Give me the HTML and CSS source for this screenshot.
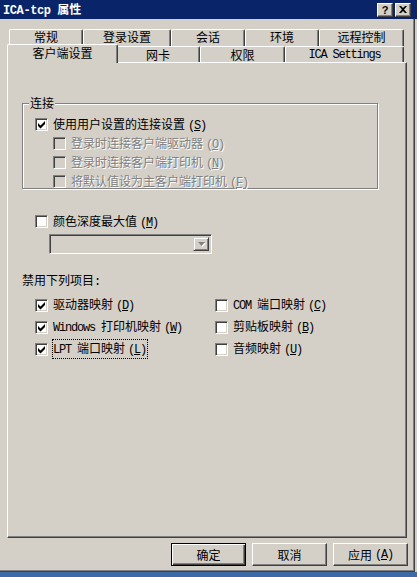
FILE: index.html
```html
<!DOCTYPE html>
<html lang="zh-CN">
<head>
  <meta charset="UTF-8" />
  <title>ICA-tcp 属性</title>
  <link rel="stylesheet" href="styles.css">
</head>
<body>
  <div class="window">
    <div class="titlebar">
      <span class="title"><span class="en">ICA-tcp</span> 属性</span>
      <div class="caption">
        <span class="cap-btn">?</span>
        <span class="cap-btn"><svg width="8" height="7" viewBox="0 0 8 7"><path d="M0 0h2l2 2 2-2h2L5 3.5 8 7H6L4 5 2 7H0l3-3.5z" fill="#000"/></svg></span>
      </div>
    </div>
    <div class="frame">
      <div class="tabs">
        <div class="tabrow back">
          <span class="tab" style="width:74px">常规</span>
          <span class="tab" style="width:88px">登录设置</span>
          <span class="tab" style="width:74px">会话</span>
          <span class="tab" style="width:74px">环境</span>
          <span class="tab" style="width:85px">远程控制</span>
        </div>
        <div class="tabrow front">
          <span class="tab active" style="width:111px">客户端设置</span>
          <span class="tab" style="width:84px">网卡</span>
          <span class="tab" style="width:85px">权限</span>
          <span class="tab" style="width:119px"><span class="en">ICA Settings</span></span>
        </div>
      </div>

      <div class="panel">
        <div class="group">
          <span class="group-label">连接</span>
          <div class="row">
            <span class="cb checked"><svg viewBox="0 0 11 11"><polygon points="2,4 4.5,6.5 9,2 9,5 4.5,9.5 2,7"/></svg></span>
            <span>使用用户设置的连接设置<span class="en key">(<u>S</u>)</span></span>
          </div>
          <div class="row sub disabled">
            <span class="cb"></span>
            <span>登录时连接客户端驱动器<span class="en key">(<u>O</u>)</span></span>
          </div>
          <div class="row sub disabled">
            <span class="cb"></span>
            <span>登录时连接客户端打印机<span class="en key">(<u>N</u>)</span></span>
          </div>
          <div class="row sub disabled">
            <span class="cb"></span>
            <span>将默认值设为主客户端打印机<span class="en key">(<u>F</u>)</span></span>
          </div>
        </div>

        <div class="row depth">
          <span class="cb"></span>
          <span>颜色深度最大值<span class="en key">(<u>M</u>)</span></span>
        </div>
        <div class="combo">
          <span class="combo-btn"><svg width="7" height="4" viewBox="0 0 7 4"><path d="M0 0h7L3.5 4z" fill="#808080"/></svg></span>
        </div>

        <div class="section-label">禁用下列项目<span class="en">:</span></div>

        <div class="grid">
          <div class="row">
            <span class="cb checked"><svg viewBox="0 0 11 11"><polygon points="2,4 4.5,6.5 9,2 9,5 4.5,9.5 2,7"/></svg></span>
            <span>驱动器映射<span class="en key">(<u>D</u>)</span></span>
          </div>
          <div class="row">
            <span class="cb"></span>
            <span><span class="en">COM </span>端口映射<span class="en key">(<u>C</u>)</span></span>
          </div>
          <div class="row">
            <span class="cb checked"><svg viewBox="0 0 11 11"><polygon points="2,4 4.5,6.5 9,2 9,5 4.5,9.5 2,7"/></svg></span>
            <span><span class="en">Windows </span>打印机映射<span class="en key">(<u>W</u>)</span></span>
          </div>
          <div class="row">
            <span class="cb"></span>
            <span>剪贴板映射<span class="en key">(<u>B</u>)</span></span>
          </div>
          <div class="row">
            <span class="cb checked"><svg viewBox="0 0 11 11"><polygon points="2,4 4.5,6.5 9,2 9,5 4.5,9.5 2,7"/></svg></span>
            <span class="focus"><span class="en">LPT </span>端口映射<span class="en key">(<u>L</u>)</span></span>
          </div>
          <div class="row">
            <span class="cb"></span>
            <span>音频映射<span class="en key">(<u>U</u>)</span></span>
          </div>
        </div>
      </div>

      <div class="buttons">
        <span class="btn default">确定</span>
        <span class="btn">取消</span>
        <span class="btn">应用<span class="en key">(<u>A</u>)</span></span>
      </div>
    </div>
  </div>
  <div class="desktop"></div>
</body>
</html>
```

FILE: styles.css
```css
body {
  margin: 0;
  width: 417px;
  height: 577px;
  overflow: hidden;
  background: #d4d0c8;
  font-family: "Noto Sans CJK SC", sans-serif;
  font-size: 12px;
  line-height: 14px;
  color: #000;
}
.en {
  font-family: "Liberation Mono", monospace;
  font-size: 12px;
  letter-spacing: -1.2px;
}
.en.key {
  margin-left: 3px;
}
u {
  text-decoration-thickness: 1px;
  text-underline-offset: 1px;
}

/* title bar */
.titlebar {
  height: 19px;
  background: #0a246a;
  color: #fff;
  display: flex;
  align-items: center;
  justify-content: space-between;
  padding: 0 6px 0 3px;
}
.title {
  font-weight: bold;
}
.title .en {
  letter-spacing: -0.4px;
  margin-right: 4px;
}
.caption {
  display: flex;
  gap: 2px;
}
.cap-btn {
  width: 16px;
  height: 14px;
  box-sizing: border-box;
  background: #d4d0c8;
  border: 1px solid;
  border-color: #fff #404040 #404040 #fff;
  box-shadow: inset -1px -1px #808080;
  color: #000;
  font: bold 11px "Liberation Sans", sans-serif;
  display: flex;
  align-items: center;
  justify-content: center;
}

/* dialog frame */
.frame {
  width: 415px;
  height: 553px;
  box-sizing: border-box;
  border-right: 1px solid #404040;
  border-bottom: 1px solid #404040;
  box-shadow: inset -1px -1px #808080;
  padding: 10px 6px 0 0;
}

/* tabs */
.tabs {
  padding-left: 9px;
}
.tabrow {
  display: flex;
}
.tab {
  box-sizing: border-box;
  flex: none;
  border: 1px solid #fff;
  border-bottom: none;
  border-right-color: #404040;
  border-radius: 2px 2px 0 0;
  box-shadow: inset -1px 0 #808080;
  background: #d4d0c8;
  display: flex;
  align-items: center;
  justify-content: center;
}
.back .tab {
  height: 17px;
  padding-bottom: 2px;
}
.front .tab {
  height: 16px;
}
.front .tab.active {
  height: 19px;
  margin: -2px -2px -1px;
  padding-bottom: 3px;
  position: relative;
  z-index: 1;
}

/* page */
.panel {
  margin-left: 7px;
  width: 400px;
  height: 476px;
  box-sizing: border-box;
  border: 1px solid;
  border-color: #fff #404040 #404040 #fff;
  box-shadow: inset -1px -1px #808080;
  padding: 40px 0 0 14px;
}
.group {
  position: relative;
  width: 356px;
  height: 86px;
  box-sizing: border-box;
  border: 1px solid #808080;
  box-shadow: inset 1px 1px #fff, 1px 1px #fff;
  padding: 11px 0 0 12px;
}
.group-label {
  position: absolute;
  left: 6px;
  top: -8px;
  padding: 0 1px;
  background: #d4d0c8;
}
.row {
  display: flex;
  align-items: center;
  height: 19px;
  white-space: nowrap;
}
.row.sub {
  padding-left: 18px;
}
.disabled {
  color: #808080;
  text-shadow: 1px 1px #fff;
}

/* checkbox */
.cb {
  flex: none;
  width: 13px;
  height: 13px;
  box-sizing: border-box;
  margin-right: 5px;
  border: 1px solid;
  border-color: #808080 #fff #fff #808080;
  box-shadow: inset 1px 1px #404040, inset -1px -1px #d4d0c8;
  background: #fff;
}
.cb svg {
  display: block;
  width: 11px;
  height: 11px;
  fill: #000;
}
.disabled .cb {
  background: #d4d0c8;
}

.depth {
  margin: 23px 0 0 13px;
}
.combo {
  margin: 3px 0 0 27px;
  width: 163px;
  height: 20px;
  box-sizing: border-box;
  border: 1px solid;
  border-color: #808080 #fff #fff #808080;
  box-shadow: inset 1px 1px #404040, inset -1px -1px #d4d0c8;
  background: #d4d0c8;
  display: flex;
  justify-content: flex-end;
  padding: 2px;
}
.combo-btn {
  width: 16px;
  box-sizing: border-box;
  border: 1px solid;
  border-color: #d4d0c8 #404040 #404040 #d4d0c8;
  box-shadow: inset 1px 1px #fff, inset -1px -1px #808080;
  display: flex;
  align-items: center;
  justify-content: center;
}
.combo-btn svg {
  filter: drop-shadow(1px 1px 0 #fff);
}

.section-label {
  margin-top: 16px;
  height: 19px;
  line-height: 19px;
}
.grid {
  margin: 5px 0 0 13px;
  display: grid;
  grid-template-columns: 180px 180px;
  grid-auto-rows: 22px;
}
.grid .row {
  height: 22px;
}
.focus {
  border: 1px dotted #000;
  padding: 1px 1px 1px 0;
  margin-left: -1px;
}

/* buttons */
.buttons {
  margin-top: 5px;
  display: flex;
  justify-content: flex-end;
  gap: 6px;
}
.btn {
  width: 75px;
  height: 23px;
  box-sizing: border-box;
  border: 1px solid;
  border-color: #fff #404040 #404040 #fff;
  box-shadow: inset -1px -1px #808080;
  display: flex;
  align-items: center;
  justify-content: center;
}
.btn.default {
  border-color: #000;
  box-shadow: inset 1px 1px #fff, inset -1px -1px #404040, inset -2px -2px #808080;
}

.desktop {
  height: 5px;
  background: #3d6aa6;
}
```
